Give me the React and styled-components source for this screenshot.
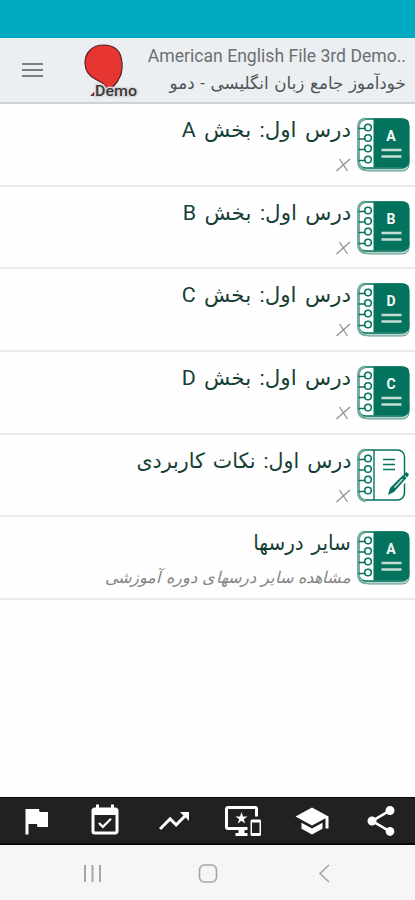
import styled, { createGlobalStyle } from "styled-components";
import {
  MdEventAvailable,
  MdFlag,
  MdImportantDevices,
  MdSchool,
  MdShare,
  MdTrendingUp,
} from "react-icons/md";

const GREEN = "#04735e";

const lessons = [
  { id: 1, title: "درس اول: بخش A", letter: "A", stretch: 1.02 },
  { id: 2, title: "درس اول: بخش B", letter: "B", stretch: 1.02 },
  { id: 3, title: "درس اول: بخش C", letter: "D", stretch: 1.02 },
  { id: 4, title: "درس اول: بخش D", letter: "C", stretch: 1.02 },
  { id: 5, title: "درس اول: نکات کاربردی", stretch: 0.98 },
  {
    id: 6,
    title: "سایر درسها",
    letter: "A",
    note: "مشاهده سایر درسهای دوره آموزشی",
    stretch: 0.95,
  },
];

const actions = [
  { id: "flag", Icon: MdFlag },
  { id: "plan", Icon: MdEventAvailable },
  { id: "progress", Icon: MdTrendingUp },
  { id: "devices", Icon: MdImportantDevices },
  { id: "school", Icon: MdSchool },
  { id: "share", Icon: MdShare },
];

const GlobalStyle = createGlobalStyle`
  * {
    box-sizing: border-box;
  }
  body {
    margin: 0;
    background: #fff;
  }
`;

const Screen = styled.div`
  display: flex;
  flex-direction: column;
  width: 415px;
  height: 900px;
  overflow: hidden;
  background: #fefefe;
  font-family: Roboto, "DejaVu Sans", sans-serif;
`;

const StatusBar = styled.div`
  flex: none;
  height: 38px;
  background: #00abc1;
`;

const Header = styled.header`
  display: flex;
  flex: none;
  height: 66px;
  padding: 0 9px 0 22px;
  background: #ebeff2;
  border-bottom: 2px solid #cfd1d2;
`;

const MenuButton = styled.button`
  display: flex;
  flex: none;
  flex-direction: column;
  gap: 4px;
  width: 21px;
  height: 15px;
  margin: 25px 0 0;
  padding: 0;
  border: 0;
  background: none;
`;

const MenuLine = styled.span`
  height: 2px;
  background: #7b7e80;
`;

const Logo = styled.svg`
  flex: none;
  width: 60px;
  height: 62px;
  margin-left: 39px;
`;

const Heading = styled.div`
  display: flex;
  flex: 1;
  flex-direction: column;
  align-items: flex-end;
  white-space: nowrap;
`;

const CourseName = styled.div`
  margin-top: 7px;
  color: #6b6f72;
  font-size: 17.6px;
  line-height: 22px;
`;

const CourseSubtitle = styled.div`
  margin-top: 4px;
  color: #505456;
  font-size: 17px;
  line-height: 24px;
  word-spacing: 1.5px;
  transform: scaleX(0.985);
  transform-origin: right;
`;

const LessonList = styled.ul`
  flex: 1;
  margin: 0;
  padding: 0;
  list-style: none;
`;

const Lesson = styled.li`
  display: flex;
  gap: 6px;
  height: 82.7px;
  padding: 13px 4px 0 5px;
  border-bottom: 2px solid #e9e9e9;
`;

const LessonText = styled.div`
  display: flex;
  flex: 1;
  flex-direction: column;
  align-items: flex-start;
  white-space: nowrap;
`;

const LessonTitle = styled.div`
  height: 28px;
  color: #153f35;
  font-size: 21px;
  line-height: 26px;
  word-spacing: 3px;
  transform: scaleX(${({ $stretch }) => $stretch});
  transform-origin: right;
`;

const LessonNote = styled.div`
  margin-top: 8px;
  color: #858585;
  font-size: 16px;
  font-style: italic;
  line-height: 24px;
  word-spacing: 1.5px;
  transform: scaleX(1.01);
  transform-origin: right;
`;

const Cross = styled.svg`
  width: 15px;
  height: 14px;
  margin-top: 13px;
`;

const BookIcon = styled.svg`
  flex: none;
  width: 54px;
  height: 56px;
`;

const ActionBar = styled.nav`
  display: flex;
  flex: none;
  justify-content: space-around;
  align-items: center;
  height: 48px;
  padding-left: 1px;
  margin-right: -1px;
  background: #212121;
  border-top: 1px solid #080808;
  border-bottom: 2px solid #080808;
  color: #fff;
`;

const Action = styled.span`
  display: flex;
  svg {
    width: 36px;
    height: 36px;
  }
`;

const SystemBar = styled.div`
  display: flex;
  flex: none;
  justify-content: space-around;
  align-items: center;
  height: 55px;
  padding: 2px 33px 0 34px;
  background: #f6f6f6;
`;

const SystemIcon = styled.svg`
  width: 22px;
  height: 22px;
  fill: none;
  stroke: #a5a5a5;
  stroke-width: 1.6;
`;

const Notebook = ({ letter }) => (
  <BookIcon viewBox="0 0 54 56">
    {letter && (
      <path
        d="M4 46q2 8 8 8h33q7 0 7-7v-6H10z"
        fill="#b9d2cb"
        stroke="#5b9d8d"
        strokeWidth="1"
      />
    )}
    <rect
      x="1.5"
      y="2"
      width={letter ? 50 : 46}
      height={letter ? 49 : 50}
      rx="7"
      fill="#fff"
      stroke={GREEN}
      strokeWidth="1.5"
    />
    <path
      d="M8 2Q1.500 3 1.500 10v34q0 8 7 9"
      fill="none"
      stroke="#73ab9e"
      strokeWidth="3"
    />
    {letter ? (
      <path d="M16.500 1.500H46q6.500 0 6.500 7v35q0 7-6.500 7H16.500z" fill={GREEN} />
    ) : (
      <path d="M17 2v50" stroke={GREEN} strokeWidth="1.400" />
    )}
    {[10.5, 21, 31.5, 42.5].map((y) => (
      <g key={y} fill="none" stroke={GREEN} strokeWidth="1.500">
        <circle cx="11" cy={y} r="3.300" />
        <path d={`M1.500 ${y + 1}h7`} />
      </g>
    ))}
    {letter ? (
      <>
        <text
          x="34"
          y="23.500"
          fill="#f4faf8"
          fontFamily="Roboto, sans-serif"
          fontSize="14"
          fontWeight="700"
          textAnchor="middle"
        >
          {letter}
        </text>
        <path d="M24.500 33h20M24.500 39.500h20" stroke="#c5ded8" strokeWidth="2.400" />
      </>
    ) : (
      <>
        <path
          d="M26 11.500h12M26 16.500h12M26 21.500h12"
          stroke={GREEN}
          strokeWidth="1.500"
        />
        <path d="M36 43l12-14" stroke="#fff" strokeWidth="8" />
        <path d="M31 47l2-7L46 27l3.500 3L37 44z" fill={GREEN} />
        <path d="M37.500 39.500l8-8.500" stroke="#c9e2db" strokeWidth="1.300" />
        <path d="M47 26l2.500-2 2.500 2.500-2 3z" fill={GREEN} />
      </>
    )}
  </BookIcon>
);

const DemoLogo = () => (
  <Logo viewBox="0 0 60 62">
    <path
      d="M21.500 7C10 7 3 15 3 25c0 8 4 13 11 16.500 6 3 8 4 10.500 8h6c4-4 6.500-8 8.500-13 1-4 1.500-8 1-12C39 13 33 7 21.500 7z"
      fill="#e73532"
      stroke="#542321"
      strokeWidth="1.200"
    />
    <path d="M9 57.500l3-3v3z" fill="#b32b28" stroke="#7a2422" />
    <text
      x="13"
      y="58"
      fill="#3a3a3a"
      stroke="#dadada"
      strokeWidth="3"
      paintOrder="stroke"
      fontFamily="Roboto, sans-serif"
      fontSize="14.500"
      fontWeight="500"
      textLength="42"
      lengthAdjust="spacingAndGlyphs"
    >
      Demo
    </text>
  </Logo>
);

const App = () => {
  return (
    <>
      <GlobalStyle />
      <Screen>
        <StatusBar />
        <Header>
          <MenuButton aria-label="menu">
            <MenuLine />
            <MenuLine />
            <MenuLine />
          </MenuButton>
          <DemoLogo />
          <Heading>
            <CourseName>American English File 3rd Demo..</CourseName>
            <CourseSubtitle dir="rtl">
              خودآموز جامع زبان انگلیسی - دمو
            </CourseSubtitle>
          </Heading>
        </Header>
        <LessonList dir="rtl">
          {lessons.map((lesson) => (
            <Lesson key={lesson.id}>
              <Notebook letter={lesson.letter} />
              <LessonText>
                <LessonTitle $stretch={lesson.stretch}>
                  {lesson.title}
                </LessonTitle>
                {lesson.note ? (
                  <LessonNote>{lesson.note}</LessonNote>
                ) : (
                  <Cross viewBox="0 0 15 14">
                    <path
                      d="M.5 13L14 1M3.500 1l8 12"
                      stroke="#8c8c8c"
                      strokeWidth="1.200"
                    />
                  </Cross>
                )}
              </LessonText>
            </Lesson>
          ))}
        </LessonList>
        <ActionBar>
          {actions.map(({ id, Icon }) => (
            <Action key={id}>
              <Icon />
            </Action>
          ))}
        </ActionBar>
        <SystemBar>
          <SystemIcon viewBox="0 0 22 22">
            <path d="M4 2v17M11.500 2v17M19 2v17" strokeWidth="2" />
          </SystemIcon>
          <SystemIcon viewBox="0 0 22 22">
            <rect x="2.500" y="2" width="17" height="17" rx="5" />
          </SystemIcon>
          <SystemIcon viewBox="0 0 22 22">
            <path d="M16 2L7 10.500l9 8.500" />
          </SystemIcon>
        </SystemBar>
      </Screen>
    </>
  );
};

export default App;
